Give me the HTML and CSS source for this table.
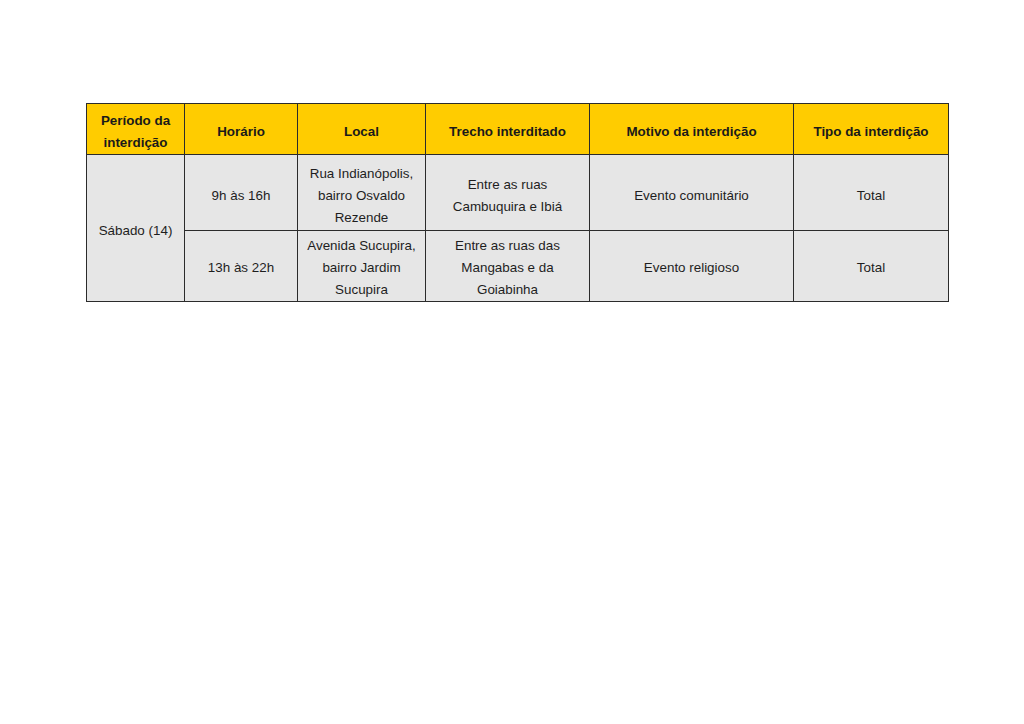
FILE: index.html
```html
<!DOCTYPE html>
<html lang="pt">
<head>
<meta charset="utf-8">
<title>Interdições</title>
<link rel="stylesheet" href="styles.css">
</head>
<body>
<div class="page">
<table class="grid">
  <colgroup>
    <col class="c1"><col class="c2"><col class="c3"><col class="c4"><col class="c5"><col class="c6">
  </colgroup>
  <thead>
    <tr class="head">
      <th>Período da interdição</th>
      <th>Horário</th>
      <th>Local</th>
      <th>Trecho interditado</th>
      <th>Motivo da interdição</th>
      <th>Tipo da interdição</th>
    </tr>
  </thead>
  <tbody>
    <tr class="r1">
      <td rowspan="2">Sábado (14)</td>
      <td>9h às 16h</td>
      <td>Rua Indianópolis,<br>bairro Osvaldo<br>Rezende</td>
      <td>Entre as ruas<br>Cambuquira e Ibiá</td>
      <td>Evento comunitário</td>
      <td>Total</td>
    </tr>
    <tr class="r2">
      <td>13h às 22h</td>
      <td>Avenida Sucupira,<br>bairro Jardim<br>Sucupira</td>
      <td>Entre as ruas das<br>Mangabas e da<br>Goiabinha</td>
      <td>Evento religioso</td>
      <td>Total</td>
    </tr>
  </tbody>
</table>
</div>
</body>
</html>
```

FILE: styles.css
```css
html, body {
  margin: 0;
  padding: 0;
  background: #ffffff;
}
.page {
  padding: 103px 0 0 86px;
}
.grid {
  border-collapse: collapse;
  table-layout: fixed;
  width: 863px;
  font-family: "Liberation Sans", Arial, sans-serif;
  font-size: 13.4px;
  line-height: 22px;
  color: #1e1e1e;
}
.c1 { width: 98px; }
.c2 { width: 113px; }
.c3 { width: 128px; }
.c4 { width: 164px; }
.c5 { width: 204px; }
.c6 { width: 155px; }
.grid th, .grid td {
  border: 1.5px solid #2b2b2b;
  text-align: center;
  vertical-align: middle;
  padding: 6px 3px 0 3px;
}
.grid th {
  background: #ffcc00;
  font-weight: bold;
  color: #1a1a1a;
}
.grid td {
  background: #e6e6e6;
}
.r2 td {
  padding-top: 4px;
}
.head { height: 51px; }
.r1 { height: 76px; }
.r2 { height: 71px; }
```
